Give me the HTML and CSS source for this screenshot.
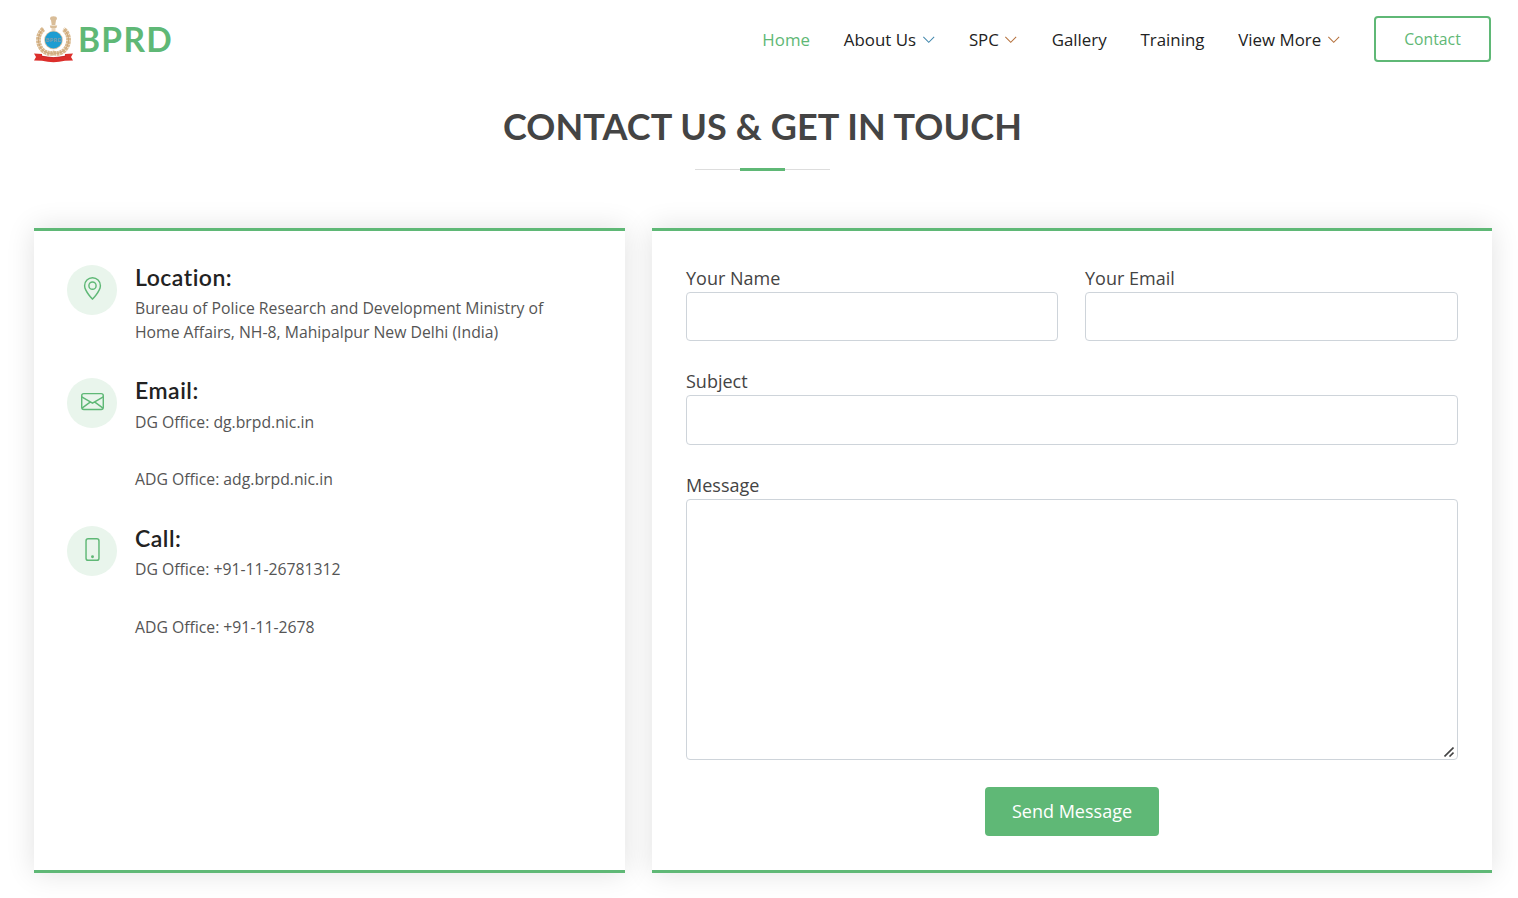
FILE: index.html
```html
<!DOCTYPE html>
<html lang="en">
<head>
<meta charset="utf-8">
<title>BPRD - Contact</title>
<link rel="stylesheet" href="styles.css">
</head>
<body>
<header class="header">
  <a class="logo">
    <svg class="emblem" viewBox="0 0 40 48">
      <g fill="#d9bd98">
        <ellipse cx="20" cy="3.5" rx="3.4" ry="2.2"/>
        <path d="M17.5 5h5l-.7 5h-3.6z"/>
        <path d="M16.3 10.5h7.4l-.8 2.4h-5.8z"/>
      </g>
      <path d="M18 13h4v3h-4z" fill="#e8d5bd"/>
      <g fill="none" stroke="#d9b98f">
        <path d="M10 14C3.500 19 3 30 10 36Q15 39.500 20 38Q25 39.500 30 36C37 30 36.500 19 30 14" stroke-width="4.800" stroke-dasharray="2.700 .5"/>
        <path d="M10 14C3.500 19 3 30 10 36Q15 39.500 20 38Q25 39.500 30 36C37 30 36.500 19 30 14" stroke="#c79d6c" stroke-width=".8"/>
      </g>
      <circle cx="20" cy="25" r="9.300" fill="#d9c3a4"/>
      <circle cx="20" cy="25" r="8.500" fill="#1d9dd2"/>
      <text class="emblem-text" x="20" y="27.400" text-anchor="middle">BPRD</text>
      <path d="M.5 38.500l8 .4v1.800q11.500 3 23 0v-1.800l8-.4-2 3.500 2 3.500-8 .3q-11.500 2.700-23 0l-8-.3 2-3.500z" fill="#dc2f2b"/>
      <path d="M8 41.200q12 3 24 0" fill="none" stroke="#b9211f" stroke-width=".7"/>
    </svg>
    <span class="brand">BPRD</span>
  </a>
  <nav class="nav">
    <a class="nav-link active">Home</a>
    <a class="nav-link">About Us <svg class="chevron blue" viewBox="0 0 16 16"><path d="M1.600 4.600L8 11 14.400 4.600"/></svg></a>
    <a class="nav-link">SPC <svg class="chevron" viewBox="0 0 16 16"><path d="M1.600 4.600L8 11 14.400 4.600"/></svg></a>
    <a class="nav-link">Gallery</a>
    <a class="nav-link">Training</a>
    <a class="nav-link">View More <svg class="chevron" viewBox="0 0 16 16"><path d="M1.600 4.600L8 11 14.400 4.600"/></svg></a>
    <a class="contact-btn">Contact</a>
  </nav>
</header>
<main class="contact">
  <div class="section-title">
    <h2>CONTACT US &amp; GET IN TOUCH</h2>
    <div class="rule"><span class="rule-accent"></span></div>
  </div>
  <div class="columns">
    <section class="card info">
      <div class="info-item">
        <span class="icon"><svg viewBox="0 0 16 16" fill="currentColor"><path d="M12.166 8.940c-.524 1.062-1.234 2.120-1.960 3.070A31.493 31.493 0 0 1 8 14.580a31.481 31.481 0 0 1-2.206-2.570c-.726-.95-1.436-2.008-1.960-3.070C3.304 7.867 3 6.862 3 6a5 5 0 0 1 10 0c0 .862-.305 1.867-.834 2.940zM8 16s6-5.686 6-10A6 6 0 0 0 2 6c0 4.314 6 10 6 10z"/><path d="M8 8a2 2 0 1 1 0-4 2 2 0 0 1 0 4zm0 1a3 3 0 1 0 0-6 3 3 0 0 0 0 6z"/></svg></span>
        <div>
          <h4>Location:</h4>
          <p>Bureau of Police Research and Development Ministry of<br>Home Affairs, NH-8, Mahipalpur New Delhi (India)</p>
        </div>
      </div>
      <div class="info-item email">
        <span class="icon"><svg viewBox="0 0 16 16" fill="none" stroke="currentColor"><rect x=".5" y="2.500" width="15" height="11" rx="1.500"/><path d="M.5 4.700L8 9.100l7.500-4.400M.7 12.600l5.900-4.300M15.300 12.600L9.400 8.300"/></svg></span>
        <div>
          <h4>Email:</h4>
          <p>DG Office: dg.brpd.nic.in</p>
          <p class="second">ADG Office: adg.brpd.nic.in</p>
        </div>
      </div>
      <div class="info-item call">
        <span class="icon"><svg viewBox="0 0 16 16" fill="none" stroke="currentColor"><rect x="3.500" y=".5" width="9" height="15" rx="1.500"/><circle cx="8" cy="13" r="1" fill="currentColor" stroke="none"/></svg></span>
        <div>
          <h4>Call:</h4>
          <p>DG Office: +91-11-26781312</p>
          <p class="second">ADG Office: +91-11-2678</p>
        </div>
      </div>
    </section>
    <form class="card form">
      <div class="row">
        <label class="field">Your Name<input type="text"></label>
        <label class="field">Your Email<input type="text"></label>
      </div>
      <label class="field">Subject<input type="text"></label>
      <label class="field message">Message<textarea></textarea><svg class="grip" viewBox="0 0 10 10"><path d="M.5 9.500l9-9M5.500 9.500l4-4"/></svg></label>
      <button class="send" type="button">Send Message</button>
    </form>
  </div>
</main>
</body>
</html>
```
FILE: styles.css
```css
* { box-sizing: border-box; }
body {
  margin: 0;
  height: 898px;
  overflow: hidden;
  background: #fff;
  color: #444;
  font-family: "Open Sans", sans-serif;
  font-size: 18px;
}
h2, h4, p { margin: 0; }
.header {
  display: flex;
  justify-content: space-between;
  align-items: center;
  height: 78px;
  padding: 0 27px 0 33px;
}
.logo { display: flex; align-items: center; gap: 4px; }
.emblem { width: 41px; height: 48px; }
.emblem-text { font: bold 6px "Open Sans", sans-serif; fill: #7d9dab; }
.brand {
  color: #5fb876;
  font: bold 33.500px/48px Lato, sans-serif;
  letter-spacing: 1.300px;
}
.nav { display: flex; align-items: center; }
.nav-link {
  display: flex;
  align-items: center;
  margin-right: 33.850px;
  padding-top: 2px;
  color: #222;
  font-size: 16.875px;
  line-height: 24px;
}
.active { color: #5fb876; }
.chevron {
  width: 13.500px;
  height: 13.500px;
  margin: -1px 0 0 5.500px;
  fill: none;
  stroke: #b5713c;
  stroke-width: 1.200;
}
.blue { stroke: #4388ad; }
.contact-btn {
  width: 117px;
  height: 46px;
  border: 2px solid #5fb876;
  border-radius: 4px;
  color: #5fb876;
  font-size: 15.750px;
  line-height: 42px;
  text-align: center;
}
.contact { padding: 25px 27px 0 34px; }
.section-title { display: flex; flex-direction: column; align-items: center; }
.section-title h2 {
  color: #444;
  font: bold 36px/46px Lato, sans-serif;
  letter-spacing: .1px;
  white-space: nowrap;
}
.rule {
  display: flex;
  justify-content: center;
  align-items: center;
  width: 135px;
  height: 3px;
  margin-top: 19px;
  background: linear-gradient(#ddd, #ddd) center / 100% 1px no-repeat;
}
.rule-accent { width: 45px; height: 3px; background: #5fb876; }
.columns {
  display: grid;
  grid-template-columns: 591px 840px;
  gap: 27px;
  height: 645px;
  margin-top: 57px;
}
.card {
  border-top: 3px solid #5fb876;
  border-bottom: 3px solid #5fb876;
  background: #fff;
  box-shadow: 0 0 27px rgba(0, 0, 0, .12);
}
.info { padding: 34px 33px; }
.info-item { display: flex; gap: 18px; }
.icon {
  display: flex;
  flex: none;
  justify-content: center;
  align-items: center;
  width: 50px;
  height: 49.500px;
  border-radius: 50%;
  background: #e9f5ec;
  color: #5fb876;
}
.icon svg { width: 23px; height: 23px; margin-bottom: 3px; }
.email .icon svg { margin-bottom: 2px; }
.info h4 {
  margin-top: -1px;
  color: #222;
  font: 600 23px/27px Lato, sans-serif;
  letter-spacing: .5px;
}
.info p { padding-top: 5px; color: #555; font-size: 15.750px; line-height: 24px; }
.info .second { padding-top: 33.500px; }
.email { margin-top: 34px; }
.email p:first-of-type { padding-top: 6px; }
.email .second { padding-top: 33px; }
.call { margin-top: 35px; }
.form { display: flex; flex-direction: column; gap: 27px; padding: 34px; }
.row { display: grid; grid-template-columns: 372px 373px; gap: 27px; }
.field { display: flex; flex-direction: column; line-height: 27px; }
.field input, .field textarea {
  width: 100%;
  height: 50px;
  margin: 0;
  border: 1px solid #ced4da;
  border-radius: 4px;
  background: #fff;
}
.row .field input { height: 49px; }
.field textarea { height: 261px; resize: none; }
.message { position: relative; }
.grip {
  position: absolute;
  right: 4px;
  bottom: 3px;
  width: 10px;
  height: 10px;
  fill: none;
  stroke: #444;
  stroke-width: 1.600;
}
.send {
  align-self: center;
  width: 174px;
  height: 49px;
  padding: 0 0 2px;
  border: 0;
  border-radius: 4px;
  background: #5fb876;
  color: #fff;
  font: 18px "Open Sans", sans-serif;
}
```
